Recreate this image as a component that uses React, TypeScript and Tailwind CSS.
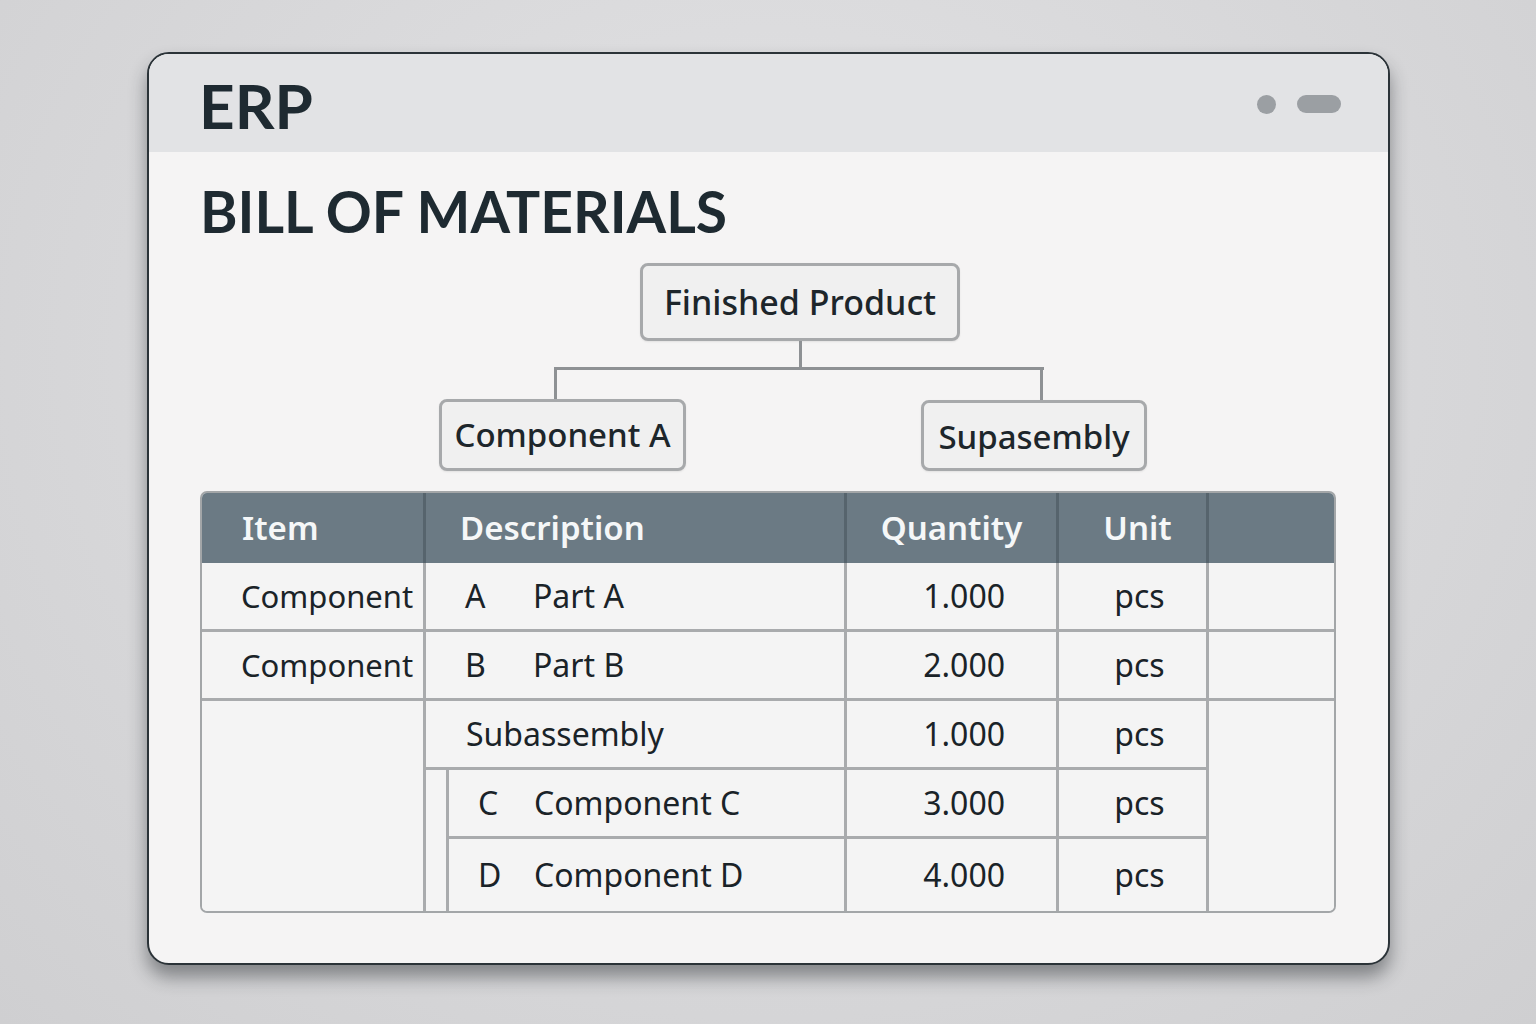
import React from 'react'

const font = { fontFamily: '"Noto Sans", "Open Sans", sans-serif' }
const titleFont = { fontFamily: 'Lato, "Noto Sans", sans-serif' }

type Row = { item?: string; code?: string; name: string; qty: string }

function TreeNode({ label, className }: { label: string; className: string }) {
  return (
    <div
      className={`absolute flex items-center justify-center rounded-[8px] border-[3px] border-[#a7a9ab] bg-[#f0f0f0] text-[33px] font-medium text-[#1d262b] shadow-[0_1px_2px_rgba(0,0,0,0.08)] ${className}`}
    >
      {label}
    </div>
  )
}

function BomTree() {
  return (
    <div className="relative h-[208px] w-[1136px]">
      <TreeNode label="Finished Product" className="left-[440px] top-0 h-[78px] w-[320px] text-[34px]" />
      {/* connectors */}
      <div className="absolute left-[599px] top-[78px] h-[29px] w-[3px] bg-[#8e9194]" />
      <div className="absolute left-[354px] top-[104px] h-[3px] w-[490px] bg-[#8e9194]" />
      <div className="absolute left-[354px] top-[104px] h-[33px] w-[3px] bg-[#8e9194]" />
      <div className="absolute left-[840px] top-[104px] h-[34px] w-[3px] bg-[#8e9194]" />
      <TreeNode label="Component A" className="left-[239px] top-[136px] h-[72px] w-[247px]" />
      <TreeNode label="Supasembly" className="left-[721px] top-[137px] h-[71px] w-[226px] pt-[2px]" />
    </div>
  )
}

const line = 'border-[#a9abad]'

function BomTable() {
  const top: Row[] = [
    { item: 'Component', code: 'A', name: 'Part A', qty: '1.000' },
    { item: 'Component', code: 'B', name: 'Part B', qty: '2.000' },
  ]
  const sub: Row[] = [
    { code: 'C', name: 'Component C', qty: '3.000' },
    { code: 'D', name: 'Component D', qty: '4.000' },
  ]
  const cell = `flex items-center border-r-[3px] border-b-[3px] ${line} bg-[#f4f4f4]`
  const head = 'flex items-center border-r-[3px] border-[#56646d] text-[33px] font-semibold text-[#f5f7f8]'

  return (
    <div
      className="grid w-[1136px] overflow-hidden rounded-[7px] border-[2px] border-[#a3a6a8] text-[32px] text-[#1a2328]"
      style={{
        gridTemplateColumns: '224px 23px 398px 212px 150px 125px',
        gridTemplateRows: '70px 69px 69px 69px 69px 72px',
      }}
    >
      {/* header */}
      <div className={`${head} bg-[#6b7a84] pl-[40px]`}>Item</div>
      <div className={`${head} col-span-2 bg-[#6b7a84] pl-[34px]`}>Description</div>
      <div className={`${head} justify-center bg-[#6b7a84]`}>Quantity</div>
      <div className={`${head} justify-center bg-[#6b7a84] pl-[10px]`}>Unit</div>
      <div className="bg-[#6b7a84]" />

      {top.map((r) => (
        <React.Fragment key={r.code}>
          <div className={`${cell} pl-[39px] text-[31px]`}>{r.item}</div>
          <div className={`${cell} col-span-2 pl-[39px]`}>
            <span className="w-[68px]">{r.code}</span>
            <span>{r.name}</span>
          </div>
          <div className={`${cell} justify-end pr-[51px]`}>{r.qty}</div>
          <div className={`${cell} justify-center pl-[14px]`}>pcs</div>
          <div className={`flex border-b-[3px] ${line} bg-[#f4f4f4]`} />
        </React.Fragment>
      ))}

      {/* subassembly block */}
      <div className={`border-r-[3px] ${line} bg-[#f4f4f4]`} style={{ gridRow: '4 / 7', gridColumn: '1' }} />
      <div className={`${cell} pl-[40px]`} style={{ gridRow: '4', gridColumn: '2 / 4' }}>
        Subassembly
      </div>
      <div className={`${cell} justify-end pr-[51px]`} style={{ gridRow: '4', gridColumn: '4' }}>1.000</div>
      <div className={`${cell} justify-center pl-[14px]`} style={{ gridRow: '4', gridColumn: '5' }}>pcs</div>
      <div className="bg-[#f4f4f4]" style={{ gridRow: '4 / 7', gridColumn: '6' }} />

      <div className={`border-r-[3px] ${line} bg-[#f4f4f4]`} style={{ gridRow: '5 / 7', gridColumn: '2' }} />
      {sub.map((r, i) => (
        <React.Fragment key={r.code}>
          <div
            className={`flex items-center border-r-[3px] ${i === 0 ? 'border-b-[3px]' : ''} ${line} bg-[#f4f4f4] pl-[29px]`}
            style={{ gridRow: String(5 + i), gridColumn: '3' }}
          >
            <span className="w-[56px]">{r.code}</span>
            <span>{r.name}</span>
          </div>
          <div
            className={`flex items-center justify-end border-r-[3px] ${i === 0 ? 'border-b-[3px]' : ''} ${line} bg-[#f4f4f4] pr-[51px]`}
            style={{ gridRow: String(5 + i), gridColumn: '4' }}
          >
            {r.qty}
          </div>
          <div
            className={`flex items-center justify-center border-r-[3px] ${i === 0 ? 'border-b-[3px]' : ''} ${line} bg-[#f4f4f4] pl-[14px]`}
            style={{ gridRow: String(5 + i), gridColumn: '5' }}
          >
            pcs
          </div>
        </React.Fragment>
      ))}
    </div>
  )
}

export default function App() {
  return (
    <main
      className="min-h-screen w-full bg-[#d7d7d9] bg-[radial-gradient(ellipse_at_50%_35%,#e3e3e5,#cfcfd1)] pl-[147px] pt-[52px]"
      style={font}
    >
      <div className="h-[913px] w-[1243px] overflow-hidden rounded-[22px] border-2 border-[#2b3338] bg-[#f5f4f4] shadow-[0_12px_18px_rgba(30,35,40,0.45)]">
        {/* title bar */}
        <div className="flex h-[98px] items-center justify-between bg-[#e2e3e5] pl-[50px] pr-[47px]">
          <div className="pt-[4px] text-[62px] font-bold leading-none text-[#1e2a31]" style={titleFont}>
            ERP
          </div>
          <div className="flex items-center gap-[21px] pt-[2px]">
            <div className="h-[19px] w-[19px] rounded-full bg-[#9b9fa3]" />
            <div className="h-[18px] w-[44px] rounded-full bg-[#9b9fa3]" />
          </div>
        </div>

        {/* content */}
        <div className="pl-[51px] pt-[31px]">
          <h1 className="text-[57px] font-bold leading-none text-[#1e2a31]" style={titleFont}>
            BILL OF MATERIALS
          </h1>
          <div className="mt-[23px]">
            <BomTree />
          </div>
          <div className="mt-[20px]">
            <BomTable />
          </div>
        </div>
      </div>
    </main>
  )
}
